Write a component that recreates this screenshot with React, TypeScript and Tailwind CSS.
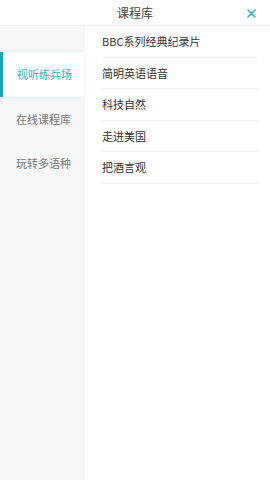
import { useState } from 'react';

const CATEGORIES = ['视听练兵场', '在线课程库', '玩转多语种'];
const COURSES = ['BBC系列经典纪录片', '简明英语语音', '科技自然', '走进美国', '把酒言观'];

const FONT = { fontFamily: '"Noto Sans CJK SC", "Liberation Sans", sans-serif' };

export default function App() {
  const [active, setActive] = useState(0);

  return (
    <div className="flex h-[480px] w-[270px] flex-col overflow-hidden bg-white" style={FONT}>
      <header className="relative flex h-[26px] shrink-0 items-center justify-center border-b border-[#eeeeee] bg-white">
        <span className="text-[12px] leading-none text-[#444444]">课程库</span>
        <button type="button" aria-label="关闭" className="absolute right-[14px] top-[9px] text-[#2ab7c4]">
          <svg width="9" height="9" viewBox="0 0 9 9" fill="none" stroke="currentColor" strokeWidth="1.6" strokeLinecap="round">
            <path d="M1 1l7 7M8 1L1 8" />
          </svg>
        </button>
      </header>

      <div className="flex flex-1">
        <nav className="flex w-[84px] shrink-0 flex-col bg-[#f8f8f8] pt-[26px] shadow-[inset_-1px_0_0_#f0f0f0]">
          {CATEGORIES.map((c, i) =>
            i === active ? (
              <button
                key={c}
                type="button"
                onClick={() => setActive(i)}
                className="relative flex h-[45px] items-center bg-white pl-[17px] text-[11px] text-[#2ab7c4] shadow-[0_0_4px_rgba(42,183,196,0.18)]"
              >
                <span className="absolute inset-y-0 left-0 w-[3px] bg-[#1aa9b4]" />
                {c}
              </button>
            ) : (
              <button
                key={c}
                type="button"
                onClick={() => setActive(i)}
                className="flex h-[44px] items-center pl-[16px] text-[11px] text-[#777777]"
              >
                {c}
              </button>
            ),
          )}
        </nav>

        <ul className="flex flex-1 flex-col pl-[18px] pr-[12px]">
          {COURSES.map((c) => (
            <li
              key={c}
              className="flex h-[31.5px] items-center border-b border-[#eeeeee] text-[11px] text-[#333333]"
            >
              {c}
            </li>
          ))}
        </ul>
      </div>
    </div>
  );
}
